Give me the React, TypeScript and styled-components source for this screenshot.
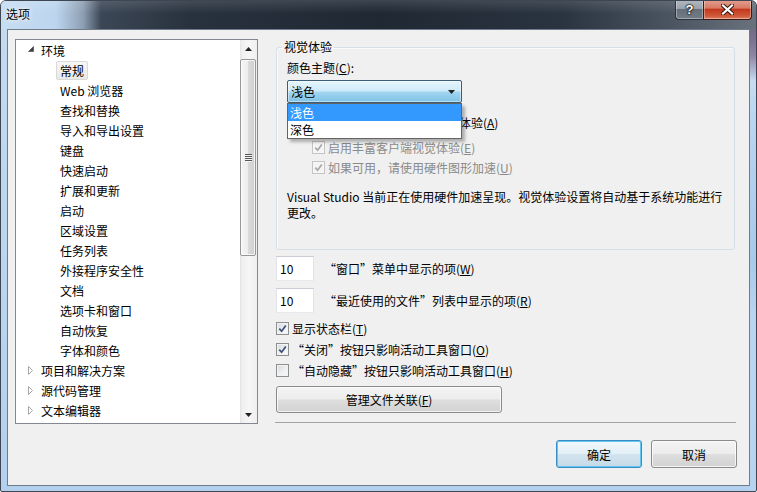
import React from "react";
import styled, { createGlobalStyle, css } from "styled-components";

const FONT = `"Microsoft YaHei", "Noto Sans CJK SC", "Noto Sans", sans-serif`;

const GlobalStyle = createGlobalStyle`
  html, body { margin: 0; padding: 0; background: #ffffff; }
  body { font-family: ${FONT}; font-size: 12px; color: #000; }
  * { box-sizing: border-box; }
`;

const Window = styled.div`
  width: 757px;
  height: 492px;
  display: flex;
  flex-direction: column;
  border: 1px solid #3d4652;
  border-radius: 6px 6px 2px 2px;
  overflow: hidden;
  font-family: ${FONT};
  font-size: 12px;
  background:
    linear-gradient(#5d5b6a 0px, #7d7290 40px, #8f86a6 55px, #c6dcf2 80px, #b8d5f1 120px, #a9c9ea 260px, #b9d6f1 320px, #b6d4f0 100%) right top / 7px 100% no-repeat,
    linear-gradient(#c4dbf1, #b3d0ee);
`;

const TitleBar = styled.div`
  height: 28px;
  flex: none;
  display: flex;
  justify-content: space-between;
  align-items: flex-start;
  padding: 0 4px 0 5px;
  background:
    linear-gradient(to bottom, rgba(255, 255, 255, 0.12), rgba(255, 255, 255, 0) 45%),
    linear-gradient(to right, #c7ddf2 0px, #bcd5ee 55px, #8e9fb3 82px, #3c4756 100px, #28323e 190px, #1f2833 380px, #2a3440 560px, #4b5561 670px, #69727d 757px);
`;

const Title = styled.span`
  margin-top: 5px;
  line-height: 16px;
  color: #000;
  text-shadow: 0 0 6px rgba(255, 255, 255, 0.9), 0 0 3px rgba(255, 255, 255, 0.9);
`;

const Caption = styled.div`
  display: flex;
  margin-top: -1px;
`;

const CaptionButton = styled.div`
  height: 20px;
  display: flex;
  align-items: center;
  justify-content: center;
  border: 1px solid #2d333b;
  border-top: none;
  box-shadow: inset 0 0 0 1px rgba(255, 255, 255, 0.35);
`;

const HelpBtn = styled(CaptionButton)`
  width: 28px;
  border-right: none;
  border-radius: 0 0 0 4px;
  background: linear-gradient(to bottom, #b2b9c1 0%, #9aa2ab 45%, #66707a 50%, #737c86 100%);
  color: #fff;
  font-family: "Liberation Sans", sans-serif;
  font-weight: bold;
  font-size: 13px;
  text-shadow: 0 0 1px #000, 0 0 2px #000, 0 0 2px #000;
`;

const CloseBtn = styled(CaptionButton)`
  width: 49px;
  border-color: #3f1a14;
  border-radius: 0 0 4px 0;
  background: linear-gradient(to bottom, #e3a192 0%, #d77a64 42%, #c4391d 50%, #cf5a3a 85%, #de8265 100%);
`;

const Frame = styled.div`
  flex: 1;
  display: flex;
  padding: 0 6px 5px 6px;
`;

const Client = styled.div`
  flex: 1;
  display: flex;
  flex-direction: column;
  border: 1px solid #6f7c8b;
  background: #f0f0f0;
  padding: 9px 0 0 7px;
`;

const MainRow = styled.div`
  display: flex;
  gap: 18px;
  height: 385px;
`;

/* ---------- Tree ---------- */

const Tree = styled.div`
  width: 243px;
  height: 385px;
  border: 1px solid #828790;
  background: #fff;
  display: flex;
`;

const TreeList = styled.div`
  flex: 1;
  overflow: hidden;
`;

const TreeRow = styled.div<{ $child?: boolean }>`
  height: 20px;
  display: flex;
  align-items: center;
  padding-left: ${(p) => (p.$child ? 40 : 12)}px;
`;

const Expander = styled.span`
  width: 9px;
  height: 20px;
  display: flex;
  align-items: center;
  flex: none;
`;

const TreeLabel = styled.span<{ $selected?: boolean }>`
  padding: 1px 3px;
  line-height: 15px;
  border: 1px solid transparent;
  border-radius: 2px;
  white-space: nowrap;
  ${(p) =>
    p.$selected &&
    css`
      border-color: #d9d9d9;
      background: linear-gradient(to bottom, #f7f7f7, #e9e9e9);
    `}
`;

const ScrollBar = styled.div`
  width: 17px;
  flex: none;
  display: flex;
  flex-direction: column;
  background: linear-gradient(to right, #e4e4e4 0px, #efefef 2px, #f6f6f6 9px, #efefef 17px);
`;

const ScrollArrow = styled.div`
  height: 17px;
  flex: none;
  display: flex;
  align-items: center;
  justify-content: center;
`;

const ScrollTrack = styled.div`
  flex: 1;
  display: flex;
  flex-direction: column;
  padding: 2px 1px 0 0;
`;

const Thumb = styled.div`
  height: 197px;
  border: 1px solid #969696;
  border-radius: 2px;
  background: linear-gradient(to right, #f5f5f5 0%, #ececec 50%, #dadada 51%, #cfcfcf 100%);
  box-shadow: inset 0 0 0 1px rgba(255, 255, 255, 0.8);
  display: flex;
  align-items: center;
  justify-content: center;
`;

const Grip = styled.div`
  width: 7px;
  height: 8px;
  background: repeating-linear-gradient(to bottom, #555 0px, #555 1px, #f4f4f4 1px, #f4f4f4 2px);
`;

/* ---------- Right column ---------- */

const RightCol = styled.div`
  width: 460px;
  display: flex;
  flex-direction: column;
`;

const Group = styled.fieldset`
  margin: 0;
  width: 459px;
  min-width: 0;
  padding: 5px 10px 28px 10px;
  border: 1px solid #d5dfe5;
  border-radius: 3px;
  box-shadow: inset 1px 1px 0 #fbfbfb;
`;

const Legend = styled.legend`
  padding: 0 2px;
  margin-left: -5px;
  line-height: 16px;
`;

const Text = styled.div`
  line-height: 16px;
  white-space: nowrap;
`;

const Paragraph = styled.div`
  margin-top: 14px;
  line-height: 16px;
`;

const Combo = styled.div`
  position: relative;
  width: 175px;
  height: 23px;
  margin-top: 4px;
  display: flex;
  align-items: center;
  justify-content: space-between;
  padding: 0 6px 0 3px;
  border: 1px solid #3a5d7a;
  border-radius: 2px;
  background: linear-gradient(to bottom, #e6f5fc 0%, #cdeaf8 48%, #a3d6f0 52%, #7fc2e6 100%);
  box-shadow: inset 0 0 0 1px rgba(255, 255, 255, 0.45);
`;

const DropList = styled.div`
  position: absolute;
  z-index: 5;
  top: calc(100% + 1px);
  left: -1px;
  width: 175px;
  border: 1px solid #646464;
  background: #fff;
  box-shadow: 3px 3px 3px rgba(0, 0, 0, 0.28);
`;

const DropItem = styled.div<{ $active?: boolean }>`
  height: 17px;
  line-height: 17px;
  padding-left: 2px;
  ${(p) =>
    p.$active &&
    css`
      background: #3399ff;
      color: #fff;
    `}
`;

const CheckRow = styled.div<{ $indent?: number; $gap?: number; $height?: number; $disabled?: boolean }>`
  display: flex;
  align-items: center;
  gap: 3px;
  height: ${(p) => p.$height ?? 16}px;
  margin-top: ${(p) => p.$gap ?? 0}px;
  padding-left: ${(p) => p.$indent ?? 0}px;
  color: ${(p) => (p.$disabled ? "#8a8a8a" : "#000")};
  white-space: nowrap;
`;

const Box = styled.span<{ $disabled?: boolean }>`
  width: 13px;
  height: 13px;
  flex: none;
  display: inline-flex;
  align-items: center;
  justify-content: center;
  border: 1px solid ${(p) => (p.$disabled ? "#c4c4c4" : "#8e8f8f")};
  background: ${(p) =>
    p.$disabled ? "#f4f4f4" : "linear-gradient(135deg, #d5d8dd 0%, #eceef0 50%, #fcfcfc 100%)"};
  box-shadow: inset 0 0 0 1px ${(p) => (p.$disabled ? "#f7f7f7" : "#f3f3f3")};
`;

const InputRow = styled.div<{ $gap: number }>`
  display: flex;
  align-items: center;
  gap: 10px;
  margin-top: ${(p) => p.$gap}px;
`;

const NumField = styled.input`
  width: 38px;
  height: 25px;
  margin: 0;
  padding: 0 0 0 3px;
  font: inherit;
  font-size: 12px;
  color: #000;
  background: #fff;
  border: 1px solid;
  border-color: #c8cbd2 #e0e3ea #e6e9ee #e0e3ea;
  outline: none;
`;

const ChecksBlock = styled.div`
  margin-top: 5px;
  display: flex;
  flex-direction: column;
`;

const PushButton = styled.button<{ $primary?: boolean; $w: number; $h: number }>`
  width: ${(p) => p.$w}px;
  height: ${(p) => p.$h}px;
  margin: 0;
  padding: 0;
  font: inherit;
  font-size: 12px;
  color: #000;
  border-radius: 3px;
  border: 1px solid #8a8a8a;
  background: linear-gradient(to bottom, #f4f4f4 0%, #ececec 48%, #dedede 52%, #d2d2d2 100%);
  box-shadow: inset 0 0 0 1px rgba(255, 255, 255, 0.75);
  ${(p) =>
    p.$primary &&
    css`
      border-color: #3a8cc4;
      background: linear-gradient(to bottom, #f1f8fc 0%, #e3eff6 48%, #d3e4ef 52%, #c5dae7 100%);
      box-shadow: inset 0 0 0 1px #62c6f2;
    `}
`;

const ManageButton = styled(PushButton)`
  margin-top: 5px;
`;

const Separator = styled.div`
  margin-top: 9px;
  height: 1px;
  margin-left: -1px;
  background: #a3a3a3;
`;

const Footer = styled.div`
  display: flex;
  justify-content: flex-end;
  gap: 9px;
  margin-top: 16px;
  padding-right: 12px;
`;

/* ---------- Icons ---------- */

const ExpandedIcon = () => (
  <svg width="6" height="6" viewBox="0 0 6 6" style={{ marginTop: -2 }}>
    <path d="M5.5 0.5 V5.5 H0.5 Z" fill="#404040" stroke="#404040" strokeWidth="0.6" strokeLinejoin="round" />
  </svg>
);

const CollapsedIcon = () => (
  <svg width="6" height="9" viewBox="0 0 6 9">
    <path d="M0.5 0.5 L4.5 4.5 L0.5 8.5 Z" fill="#fff" stroke="#a6a6a6" strokeWidth="1" strokeLinejoin="miter" />
  </svg>
);

const UpArrow = () => (
  <svg width="7" height="4" viewBox="0 0 7 4">
    <path d="M0 4 L3.5 0 L7 4 Z" fill="#222" />
  </svg>
);

const DownArrow = () => (
  <svg width="7" height="4" viewBox="0 0 7 4">
    <path d="M0 0 H7 L3.5 4 Z" fill="#222" />
  </svg>
);

const CheckMark = ({ disabled }: { disabled?: boolean }) => (
  <svg width="9" height="9" viewBox="0 0 9 9">
    <path
      d="M1.3 4.6 L3.6 7.2 L7.8 1.4"
      fill="none"
      stroke={disabled ? "#a8a8a8" : "#3b4f78"}
      strokeWidth="1.7"
    />
  </svg>
);

const CloseGlyph = () => (
  <svg width="13" height="11" viewBox="0 0 13 11">
    <path d="M2 1.5 L11 9.5 M11 1.5 L2 9.5" stroke="#3a1710" strokeWidth="4.2" strokeLinecap="square" />
    <path d="M2 1.5 L11 9.5 M11 1.5 L2 9.5" stroke="#ffffff" strokeWidth="2.2" strokeLinecap="square" />
  </svg>
);

/* ---------- Parts ---------- */

const Check = ({ checked, disabled }: { checked?: boolean; disabled?: boolean }) => (
  <Box $disabled={disabled}>{checked && <CheckMark disabled={disabled} />}</Box>
);

const envChildren = [
  "常规",
  "Web 浏览器",
  "查找和替换",
  "导入和导出设置",
  "键盘",
  "快速启动",
  "扩展和更新",
  "启动",
  "区域设置",
  "任务列表",
  "外接程序安全性",
  "文档",
  "选项卡和窗口",
  "自动恢复",
  "字体和颜色",
];

const collapsed = ["项目和解决方案", "源代码管理", "文本编辑器"];

export default function App() {
  return (
    <>
      <GlobalStyle />
      <Window>
        <TitleBar>
          <Title>选项</Title>
          <Caption>
            <HelpBtn>?</HelpBtn>
            <CloseBtn>
              <CloseGlyph />
            </CloseBtn>
          </Caption>
        </TitleBar>
        <Frame>
          <Client>
            <MainRow>
              <Tree>
                <TreeList>
                  <TreeRow>
                    <Expander>
                      <ExpandedIcon />
                    </Expander>
                    <TreeLabel>环境</TreeLabel>
                  </TreeRow>
                  {envChildren.map((name, i) => (
                    <TreeRow key={name} $child>
                      <TreeLabel $selected={i === 0}>{name}</TreeLabel>
                    </TreeRow>
                  ))}
                  {collapsed.map((name) => (
                    <TreeRow key={name}>
                      <Expander>
                        <CollapsedIcon />
                      </Expander>
                      <TreeLabel>{name}</TreeLabel>
                    </TreeRow>
                  ))}
                </TreeList>
                <ScrollBar>
                  <ScrollArrow>
                    <UpArrow />
                  </ScrollArrow>
                  <ScrollTrack>
                    <Thumb>
                      <Grip />
                    </Thumb>
                  </ScrollTrack>
                  <ScrollArrow>
                    <DownArrow />
                  </ScrollArrow>
                </ScrollBar>
              </Tree>

              <RightCol>
                <Group>
                  <Legend>视觉体验</Legend>
                  <Text>
                    颜色主题(<u>C</u>):
                  </Text>
                  <Combo>
                    <span>浅色</span>
                    <DownArrow />
                    <DropList>
                      <DropItem $active>浅色</DropItem>
                      <DropItem>深色</DropItem>
                    </DropList>
                  </Combo>
                  <CheckRow $gap={11}>
                    <Check checked />
                    <span>
                      根据客户端性能自动调整视觉体验(<u>A</u>)
                    </span>
                  </CheckRow>
                  <CheckRow $gap={9} $indent={25} $disabled>
                    <Check checked disabled />
                    <span>
                      启用丰富客户端视觉体验(<u>E</u>)
                    </span>
                  </CheckRow>
                  <CheckRow $gap={4} $indent={25} $disabled>
                    <Check checked disabled />
                    <span>
                      如果可用，请使用硬件图形加速(<u>U</u>)
                    </span>
                  </CheckRow>
                  <Paragraph>
                    Visual Studio 当前正在使用硬件加速呈现。视觉体验设置将自动基于系统功能进行
                    <br />
                    更改。
                  </Paragraph>
                </Group>

                <InputRow $gap={6}>
                  <NumField readOnly defaultValue="10" />
                  <span>
                    “窗口”菜单中显示的项(<u>W</u>)
                  </span>
                </InputRow>
                <InputRow $gap={7}>
                  <NumField readOnly defaultValue="10" />
                  <span>
                    “最近使用的文件”列表中显示的项(<u>R</u>)
                  </span>
                </InputRow>

                <ChecksBlock>
                  <CheckRow $height={21}>
                    <Check checked />
                    <span>
                      显示状态栏(<u>T</u>)
                    </span>
                  </CheckRow>
                  <CheckRow $height={21}>
                    <Check checked />
                    <span>
                      “关闭”按钮只影响活动工具窗口(<u>O</u>)
                    </span>
                  </CheckRow>
                  <CheckRow $height={21}>
                    <Check />
                    <span>
                      “自动隐藏”按钮只影响活动工具窗口(<u>H</u>)
                    </span>
                  </CheckRow>
                </ChecksBlock>

                <ManageButton $w={226} $h={27}>
                  管理文件关联(<u>F</u>)
                </ManageButton>
                <Separator />
              </RightCol>
            </MainRow>

            <Footer>
              <PushButton $primary $w={86} $h={28}>
                确定
              </PushButton>
              <PushButton $w={86} $h={28}>
                取消
              </PushButton>
            </Footer>
          </Client>
        </Frame>
      </Window>
    </>
  );
}
